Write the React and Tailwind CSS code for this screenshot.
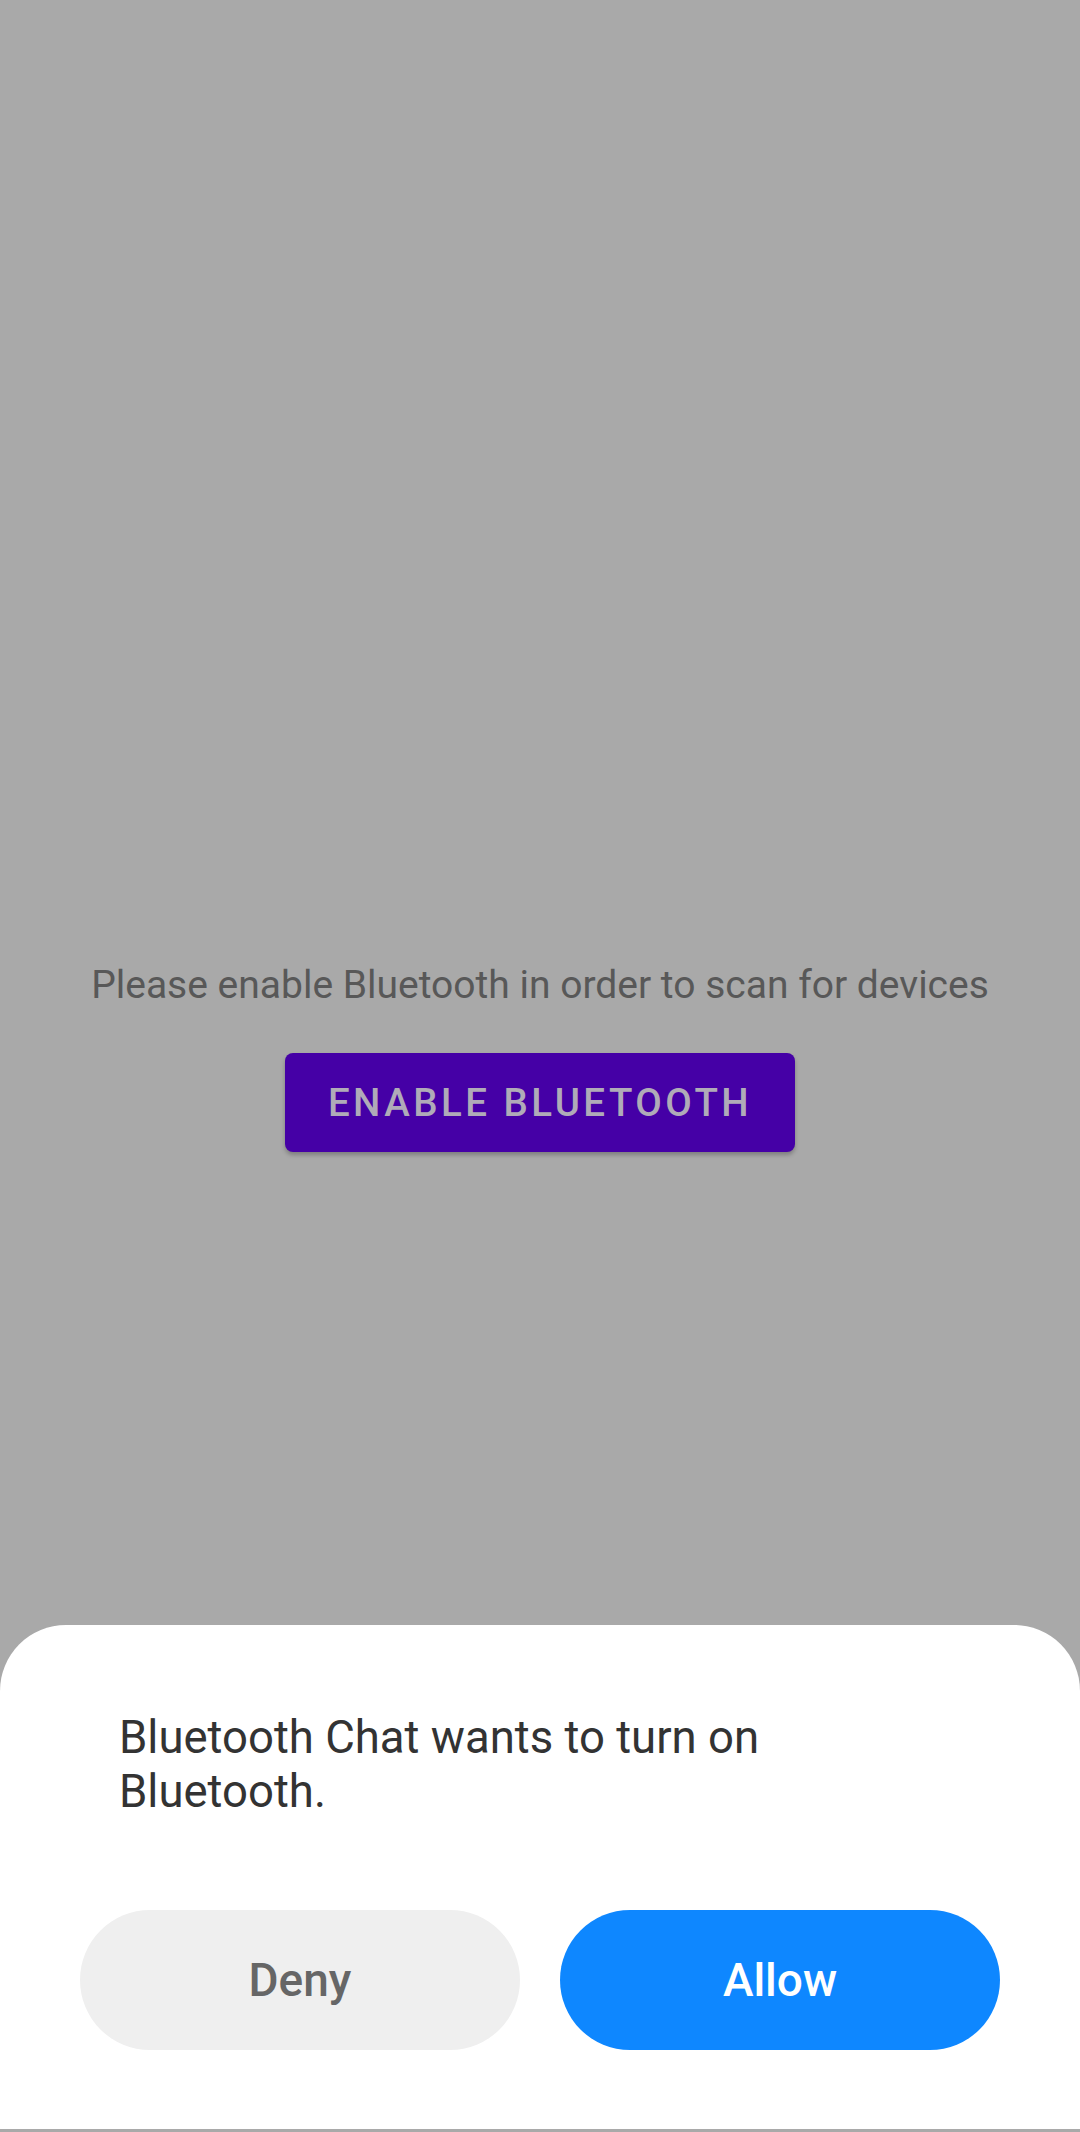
export default function App() {
  return (
    <div
      className="flex h-[2132px] w-[1080px] flex-col bg-[#a9a9a9]"
      style={{ fontFamily: 'Roboto, "Liberation Sans", sans-serif' }}
    >
      {/* main screen content, dimmed by the dialog scrim */}
      <div className="flex flex-col items-center pt-[962px]">
        <p className="text-[39px] leading-[46px] text-[#585858]">
          Please enable Bluetooth in order to scan for devices
        </p>
        <button className="mt-[45px] flex h-[99px] w-[510px] items-center justify-center rounded-[8px] bg-[#4500a6] text-[38.5px] font-medium tracking-[0.09em] text-[#b0abb8] shadow-[0_3px_4px_rgba(0,0,0,0.25)]">
          ENABLE BLUETOOTH
        </button>
      </div>

      {/* permission bottom sheet */}
      <div className="mt-auto mb-[3px] rounded-t-[66px] bg-white px-[80px] pt-[86px] pb-[79px]">
        <p className="pl-[39px] pr-[150px] text-[45.5px] leading-[54px] text-[#333333]">
          Bluetooth Chat wants to turn on Bluetooth.
        </p>
        <div className="mt-[91px] flex gap-[40px]">
          <button className="flex h-[140px] flex-1 items-center justify-center rounded-full bg-[#efefef] text-[46px] font-medium text-[#666666]">
            Deny
          </button>
          <button className="flex h-[140px] flex-1 items-center justify-center rounded-full bg-[#0e87ff] text-[46px] font-medium text-white">
            Allow
          </button>
        </div>
      </div>
    </div>
  );
}
